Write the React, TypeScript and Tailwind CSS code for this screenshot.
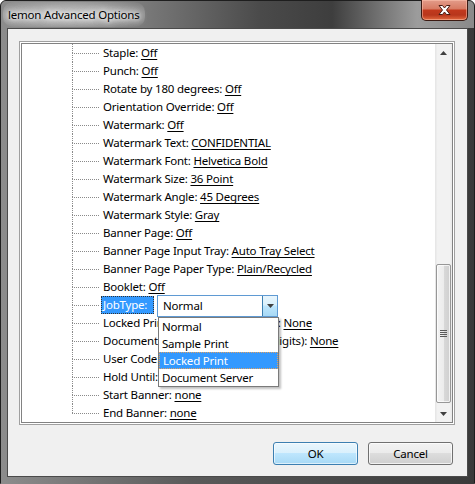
import clsx from 'clsx'

type Item = { label: string; value?: string }

const rows: Item[] = [
  { label: 'Staple', value: 'Off' },
  { label: 'Punch', value: 'Off' },
  { label: 'Rotate by 180 degrees', value: 'Off' },
  { label: 'Orientation Override', value: 'Off' },
  { label: 'Watermark', value: 'Off' },
  { label: 'Watermark Text', value: 'CONFIDENTIAL' },
  { label: 'Watermark Font', value: 'Helvetica Bold' },
  { label: 'Watermark Size', value: '36 Point' },
  { label: 'Watermark Angle', value: '45 Degrees' },
  { label: 'Watermark Style', value: 'Gray' },
  { label: 'Banner Page', value: 'Off' },
  { label: 'Banner Page Input Tray', value: 'Auto Tray Select' },
  { label: 'Banner Page Paper Type', value: 'Plain/Recycled' },
  { label: 'Booklet', value: 'Off' },
  { label: 'JobType' },
  { label: 'Locked Print Password (4-8 digits)', value: 'None' },
  { label: 'Document Server Password (4-8 digits)', value: 'None' },
  { label: 'User Code', value: 'None' },
  { label: 'Hold Until', value: 'None' },
  { label: 'Start Banner', value: 'none' },
  { label: 'End Banner', value: 'none' },
]

const jobTypes = ['Normal', 'Sample Print', 'Locked Print', 'Document Server']

function Arrow({ up }: { up?: boolean }) {
  return (
    <svg width="7" height="4" viewBox="0 0 7 4" className="block">
      <path d={up ? 'M0 4 L3.5 0 L7 4 Z' : 'M0 0 L7 0 L3.5 4 Z'} fill="#404040" />
    </svg>
  )
}

function TreeRow({ last, children, tight }: { last?: boolean; tight?: boolean; children: React.ReactNode }) {
  return (
    <div className="flex h-[18px] shrink-0">
      <div className="w-[50px] shrink-0" />
      {/* tree connector */}
      <div className="flex w-[27px] shrink-0 flex-col">
        <div className="h-[9px] border-l border-dotted border-[#8a8a8a]" />
        <div
          className={clsx(
            'flex-1 border-t border-dotted border-[#8a8a8a]',
            !last && 'border-l',
          )}
        />
      </div>
      <div className={clsx('flex items-center whitespace-nowrap', tight ? 'pl-[2px]' : 'pl-[4px]')}>
        {children}
      </div>
    </div>
  )
}

function JobTypeCombo() {
  return (
    <div className="relative z-10 -mt-[1px] ml-[3px] self-start">
      <div className="flex h-[22px] w-[121px] border border-[#5f9ad3] bg-white">
        <div className="flex flex-1 items-center pl-[5px]">Normal</div>
        <div className="flex w-[15px] items-center justify-center border-l border-[#3c7fb1] bg-[linear-gradient(180deg,#e8f5fc_0%,#d9f0fc_45%,#bee6fd_50%,#a7d9f5_100%)]">
          <Arrow />
        </div>
      </div>
      {/* open list */}
      <div className="absolute left-[1px] top-full w-[121px] border border-[#7a7a7a] bg-white shadow-[2px_2px_2px_rgba(0,0,0,0.25)]">
        {jobTypes.map((t) => (
          <div
            key={t}
            className={clsx(
              'flex h-[17px] items-center pl-[3px]',
              t === 'Locked Print' &&
                'border border-dotted border-[#e0a060] bg-[#3399ff] pl-[2px] text-white',
            )}
          >
            {t}
          </div>
        ))}
      </div>
    </div>
  )
}

function Scrollbar() {
  return (
    <div className="flex w-[17px] shrink-0 flex-col bg-[linear-gradient(90deg,#e4e4e4_0%,#f2f2f2_15%,#f2f2f2_85%,#e9e9e9_100%)]">
      <div className="flex h-[17px] items-center justify-center">
        <Arrow up />
      </div>
      <div className="h-[203px]" />
      <div className="mx-auto flex h-[139px] w-[15px] items-center justify-center rounded-[2px] border border-[#979797] bg-[linear-gradient(90deg,#f3f3f3_0%,#ececec_50%,#d9d9d9_51%,#cfcfcf_100%)] shadow-[inset_0_0_0_1px_rgba(255,255,255,0.7)]">
        <div className="flex w-[7px] flex-col gap-[1px]">
          <div className="h-[1px] bg-[#5a5a5a]" />
          <div className="h-[1px] bg-[#5a5a5a]" />
          <div className="h-[1px] bg-[#5a5a5a]" />
          <div className="h-[1px] bg-[#5a5a5a]" />
        </div>
      </div>
      <div className="h-[2px]" />
      <div className="flex h-[17px] items-center justify-center">
        <Arrow />
      </div>
    </div>
  )
}

function CloseButton() {
  return (
    <div className="-mt-[1px] mr-[6px] flex h-[21px] w-[47px] items-center justify-center self-start rounded-b-[5px] border border-t-0 border-[#3b1a12] bg-[linear-gradient(180deg,#e39c8a_0%,#d77a62_45%,#c2391d_50%,#b8361c_75%,#e2693f_100%)] shadow-[inset_0_0_0_1px_rgba(255,200,180,0.5)]">
      <svg width="15" height="12" viewBox="0 0 15 12">
        <path
          d="M2 1.5 L5.5 1.5 L7.5 4 L9.5 1.5 L13 1.5 L9.5 6 L13 10.5 L9.5 10.5 L7.5 8 L5.5 10.5 L2 10.5 L5.5 6 Z"
          fill="#ffffff"
          stroke="#4a1c12"
          strokeWidth="1"
          strokeLinejoin="round"
        />
      </svg>
    </div>
  )
}

export default function App() {
  return (
    <div className="flex h-[484px] w-[475px] flex-col rounded-t-[6px] border border-[#1e1e1e] bg-[#3c3c3c] font-['Segoe_UI','Noto_Sans',sans-serif] text-[11.5px] tracking-[-0.2px] text-black">
      {/* title bar */}
      <div className="flex h-[27px] shrink-0 items-center justify-between rounded-t-[5px] bg-[linear-gradient(90deg,#8c8c8c_0%,#7a7a7a_30%,#4a4a4a_55%,#3e3e3e_70%,#9c9c9c_88%,#8a8a8a_100%)]">
        <span className="ml-[2px] rounded-[10px] bg-[radial-gradient(ellipse_at_center,rgba(255,255,255,0.5)_0%,rgba(255,255,255,0.3)_50%,rgba(255,255,255,0)_100%)] px-[5px] py-[4px] text-black [text-shadow:0_0_8px_#fff,0_0_8px_#fff,0_0_4px_#fff]">
          lemon Advanced Options
        </span>
        <CloseButton />
      </div>

      {/* frame + client */}
      <div className="flex flex-1 flex-col bg-[linear-gradient(90deg,#8c8c8c_0%,#5a5a5a_40%,#3a3a3a_100%)] px-[6px] pb-[7px]">
        <div className="flex flex-1 flex-col border border-[#4a4a4a] bg-[#f0f0f0] pb-[11px] pl-[11px] pr-[14px] pt-[12px]">
          {/* tree view */}
          <div className="h-[384px] w-[436px] border border-[#a0a0a0] bg-white p-[1px]">
            <div className="flex h-full border border-[#828282] bg-white">
              <div className="flex flex-1 flex-col overflow-hidden">
                {rows.map((r, i) =>
                  r.value === undefined ? (
                    <TreeRow key={r.label} tight>
                      <span className="flex h-[18px] w-[53px] items-center border border-dotted border-[#333] bg-[#3399ff] px-[1px] text-white">
                        {r.label}:
                      </span>
                      <JobTypeCombo />
                    </TreeRow>
                  ) : (
                    <TreeRow key={r.label} last={i === rows.length - 1}>
                      <span>
                        {r.label}: <span className="underline underline-offset-[2px]">{r.value}</span>
                      </span>
                    </TreeRow>
                  ),
                )}
              </div>
              <Scrollbar />
            </div>
          </div>

          {/* buttons */}
          <div className="mt-[17px] flex justify-end gap-[10px]">
            <button className="flex h-[23px] w-[85px] items-center justify-center rounded-[3px] border border-[#3c7fb1] bg-[linear-gradient(180deg,#eaf6fd_0%,#d9f0fc_49%,#bee6fd_50%,#a7d9f5_100%)] shadow-[inset_0_0_0_1px_rgba(255,255,255,0.6)]">
              OK
            </button>
            <button className="flex h-[23px] w-[85px] items-center justify-center rounded-[3px] border border-[#707070] bg-[linear-gradient(180deg,#f2f2f2_0%,#ebebeb_49%,#dddddd_50%,#cfcfcf_100%)] shadow-[inset_0_0_0_1px_rgba(255,255,255,0.7)]">
              Cancel
            </button>
          </div>
        </div>
      </div>
    </div>
  )
}
